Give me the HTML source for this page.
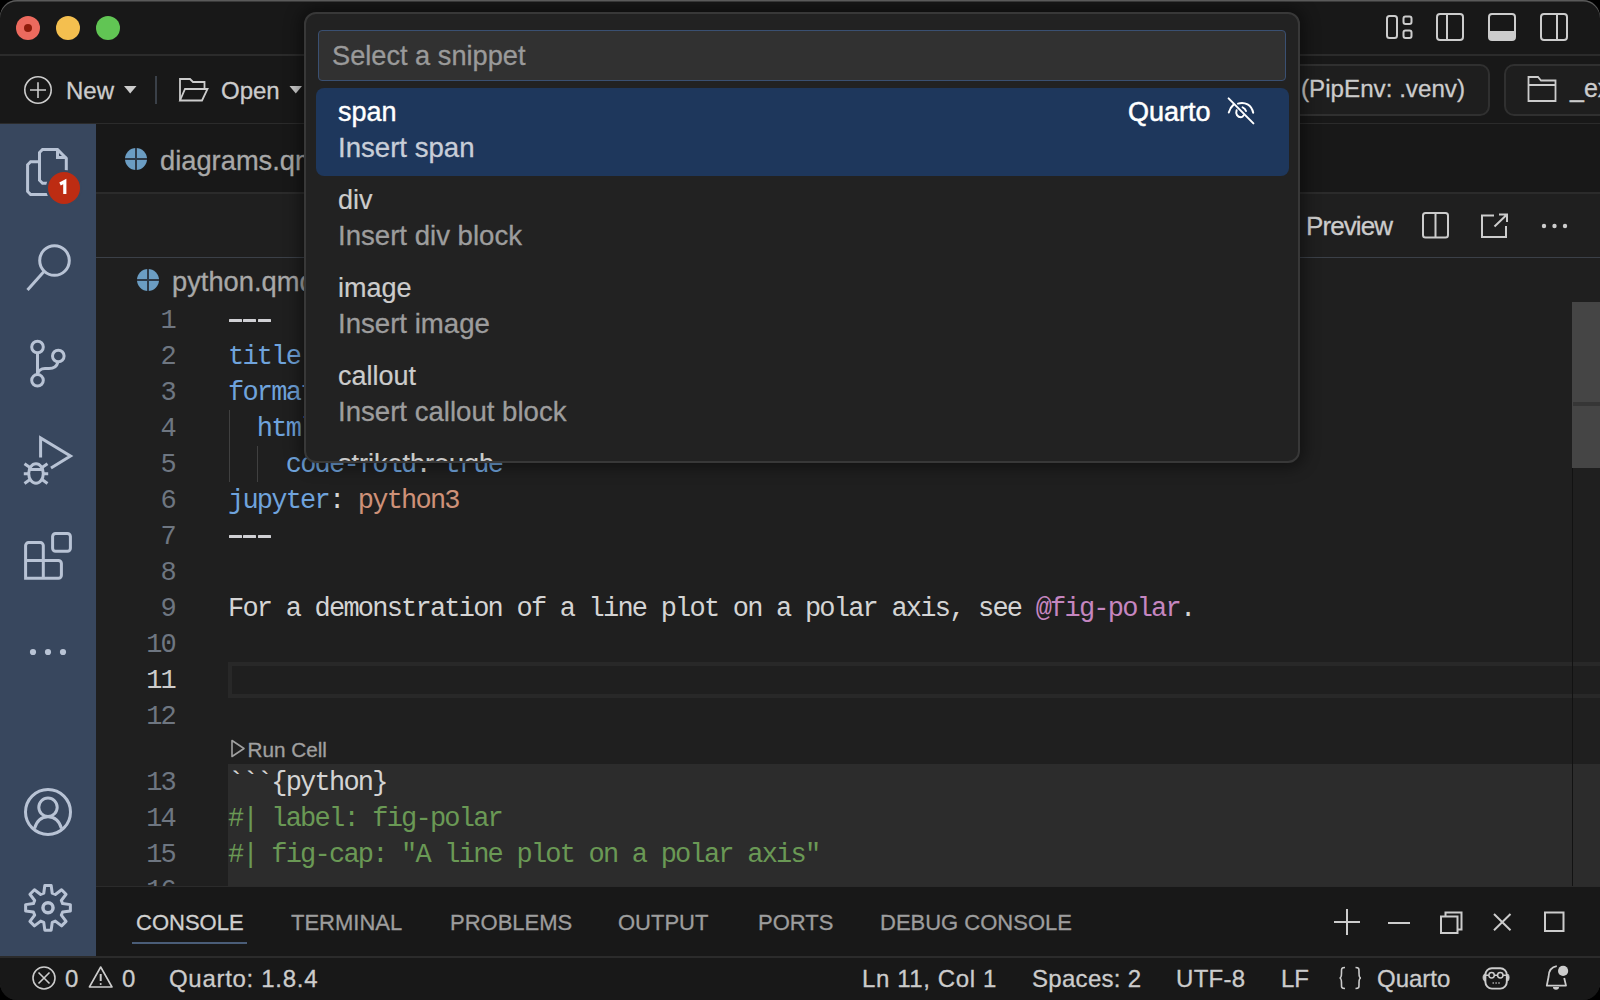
<!DOCTYPE html>
<html><head><meta charset="utf-8">
<style>
*{box-sizing:border-box;margin:0;padding:0}
html,body{width:1600px;height:1000px;overflow:hidden;background:#000}
body{font-family:"Liberation Sans",sans-serif;color:#cccccc;position:relative}
.a{position:absolute}
#win{position:absolute;left:0;top:0;width:1600px;height:1000px;border-radius:17px;overflow:hidden;background:#181818}
#winborder{position:absolute;left:0;top:0;width:1600px;height:1000px;border-radius:17px;box-shadow:inset 0 1.5px 0 #5a5a5a;pointer-events:none}
.mono{font-family:"Liberation Mono",monospace}
.t{position:absolute;white-space:pre;line-height:1;-webkit-text-stroke:0.3px}
svg{position:absolute;overflow:visible}
.ln{position:absolute;left:100px;width:75px;text-align:right;font-family:"Liberation Mono",monospace;font-size:27px;letter-spacing:-1.78px;margin-top:1px;line-height:36px;color:#6e7681;white-space:pre}
.cl{position:absolute;left:228px;font-family:"Liberation Mono",monospace;font-size:27px;letter-spacing:-1.78px;margin-top:1px;line-height:36px;color:#d4d4d4;white-space:pre}
.k{color:#6fa3dc}.s{color:#ce9178}.p{color:#c586c0}.c{color:#6a9955}
</style></head><body>
<div id="win">

  <div class="a" style="left:0;top:0;width:1600px;height:54px;background:#181818"></div>
  <div class="a" style="left:0;top:54px;width:1600px;height:2px;background:#2b2b2b"></div>
  <div class="a" style="left:16px;top:16px;width:24px;height:24px;border-radius:50%;background:#ec6a5e"></div>
  <div class="a" style="left:24px;top:24px;width:8px;height:8px;border-radius:50%;background:#8e1c0b"></div>
  <div class="a" style="left:56px;top:16px;width:24px;height:24px;border-radius:50%;background:#f4bf4f"></div>
  <div class="a" style="left:96px;top:16px;width:24px;height:24px;border-radius:50%;background:#61c554"></div>
  <svg style="left:0;top:0" width="1600" height="54" fill="none" stroke="#cccccc" stroke-width="2">
    <rect x="1387" y="16" width="10" height="22" rx="2.5"/>
    <rect x="1403.5" y="16.5" width="8" height="7.5" rx="2"/>
    <rect x="1403.5" y="30.5" width="8" height="7.5" rx="2"/>
    <rect x="1437" y="14" width="26" height="26" rx="3"/>
    <line x1="1447" y1="14" x2="1447" y2="40"/>
    <rect x="1489" y="14" width="26" height="26" rx="3"/>
    <path d="M1489 31 H1515 V37 a3 3 0 0 1 -3 3 H1492 a3 3 0 0 1 -3 -3 Z" fill="#cccccc" stroke="none"/>
    <rect x="1541" y="14" width="26" height="26" rx="3"/>
    <line x1="1557" y1="14" x2="1557" y2="40"/>
  </svg>


  <div class="a" style="left:0;top:123px;width:1600px;height:1px;background:#2b2b2b"></div>
  <svg style="left:0;top:56px" width="320" height="66" fill="none" stroke="#cccccc" stroke-width="1.6">
    <circle cx="38" cy="34" r="13.2"/>
    <path d="M30 34 H46 M38 26.2 V42"/>
    <path d="M124 30 L136.5 30 L130.2 37.6 Z" fill="#cccccc" stroke="none"/>
    <line x1="156" y1="20" x2="156" y2="48" stroke="#3a4048" stroke-width="2"/>
    <path d="M180 44.5 V23 H190 L193 26 H204.5 V32.5" stroke-width="1.8"/>
    <path d="M180 44.5 L185 33 H207.5 L202 44.5 Z" stroke-width="1.8"/>
    <path d="M289.5 30 L302 30 L295.8 37.6 Z" fill="#cccccc" stroke="none"/>
  </svg>
  <div class="t" style="left:66px;top:79px;font-size:24px;color:#cccccc">New</div>
  <div class="t" style="left:221px;top:79px;font-size:24px;color:#cccccc">Open</div>
  <div class="a" style="left:1160px;top:64px;width:330px;height:52px;border:2px solid #303030;border-radius:10px;background:#1e1e1e"></div>
  <div class="t" style="left:1301px;top:77px;font-size:24.2px;color:#cccccc">(PipEnv: .venv)</div>
  <div class="a" style="left:1504px;top:64px;width:140px;height:52px;border:2px solid #303030;border-radius:10px;background:#1e1e1e"></div>
  <svg style="left:0;top:56px" width="1600" height="66" fill="none" stroke="#cccccc" stroke-width="1.8">
    <path d="M1528.5 45 V21 H1538 L1541 24.5 H1555.5 V45 Z"/>
    <path d="M1528.5 29 H1555.5"/>
  </svg>
  <div class="t" style="left:1570px;top:76px;font-size:25px;color:#cccccc">_ex</div>


  <div class="a" style="left:0;top:124px;width:96px;height:832px;background:#38475e"></div>
  <svg style="left:0;top:0" width="96" height="1000" fill="none" stroke="#b8c3d5" stroke-width="3" stroke-linejoin="round">
    <!-- files -->
    <path d="M42.5 183.2 L39.5 180.2 V152.5 L42.5 149.5 H57.5 L66.3 158.3 V183.2 Z" stroke-linejoin="miter"/>
    <path d="M57.5 149.5 V157.6 H66.3" stroke-linejoin="miter"/>
    <path d="M39.5 161.8 H30.6 L27.6 164.8 V191.5 L30.6 194.5 H52" stroke-linejoin="miter"/>
    <!-- search -->
    <circle cx="54.5" cy="260.5" r="14.8"/>
    <line x1="44" y1="271.5" x2="27.5" y2="290"/>
    <!-- git -->
    <circle cx="37.5" cy="347" r="5.8"/>
    <circle cx="58.3" cy="356" r="5.8"/>
    <circle cx="37.5" cy="380.3" r="5.8"/>
    <path d="M37.5 352.8 V374.5"/>
    <path d="M58 361.8 C57 366 54 368.5 49 368.5 H45 C41 368.5 38 371 37.5 374.5"/>
    <!-- debug -->
    <path d="M40.6 457.5 V438 L70.5 456 L51 468" stroke-linejoin="miter"/>
    <ellipse cx="36" cy="473.5" rx="7.3" ry="9.8"/>
    <path d="M28.5 469.5 H43.5"/>
    <path d="M24.5 463.8 L30 467.5 M47.5 463.8 L42 467.5 M23.8 473.8 H28.5 M48.2 473.8 H43.5 M24.5 483.5 L30 479.5 M47.5 483.5 L42 479.5"/>
    <!-- extensions -->
    <path d="M25.6 578.3 V545.6 a3 3 0 0 1 3 -3 H40.3 a3 3 0 0 1 3 3 V560.4 H58.4 a3 3 0 0 1 3 3 V575.3 a3 3 0 0 1 -3 3 Z" stroke-linejoin="miter"/>
    <path d="M25.6 560.4 H43.3 V578.3"/>
    <rect x="52.6" y="533.5" width="17.8" height="17.8" rx="3"/>
    <!-- account -->
    <circle cx="48" cy="812" r="22.5"/>
    <circle cx="48" cy="807.2" r="9.2"/>
    <path d="M34.5 828.5 C37 820 42 816.8 48 816.8 C54 816.8 59 820 61.5 828.5"/>
    <!-- gear -->
    <path d="M43.76 893.20 L44.82 885.43 L51.18 885.43 L52.24 893.20 L55.32 894.48 L61.57 889.73 L66.07 894.23 L61.32 900.48 L62.60 903.56 L70.37 904.62 L70.37 910.98 L62.60 912.04 L61.32 915.12 L66.07 921.37 L61.57 925.87 L55.32 921.12 L52.24 922.40 L51.18 930.17 L44.82 930.17 L43.76 922.40 L40.68 921.12 L34.43 925.87 L29.93 921.37 L34.68 915.12 L33.40 912.04 L25.63 910.98 L25.63 904.62 L33.40 903.56 L34.68 900.48 L29.93 894.23 L34.43 889.73 L40.68 894.48 Z"/>
    <circle cx="48" cy="907.8" r="5.05" stroke-width="3.5"/>
  </svg>
  <svg style="left:0;top:0" width="96" height="1000">
    <circle cx="33" cy="652" r="3.1" fill="#b8c3d5"/>
    <circle cx="48" cy="652" r="3.1" fill="#b8c3d5"/>
    <circle cx="63" cy="652" r="3.1" fill="#b8c3d5"/>
    <circle cx="64" cy="188" r="18" fill="#38475e"/>
    <circle cx="64" cy="188" r="16" fill="#bd2c12"/>
    <path d="M60 184 L64.8 181.5 V194" stroke="#ffffff" stroke-width="3.2" fill="none" stroke-linejoin="miter"/>
  </svg>
  


  <!-- tab bar -->
  <div class="a" style="left:96px;top:124px;width:1504px;height:68px;background:#181818"></div>
  <svg style="left:125px;top:148px" width="22" height="22">
    <circle cx="11" cy="11" r="11" fill="#6b9dc3"/>
    <line x1="11" y1="0" x2="11" y2="22" stroke="#2d3947" stroke-width="2"/>
    <line x1="0" y1="11" x2="22" y2="11" stroke="#2d3947" stroke-width="2"/>
  </svg>
  <div class="t" style="left:160px;top:147px;font-size:27.3px;color:#a8a8a8">diagrams.qmd</div>
  <div class="a" style="left:96px;top:192px;width:1504px;height:2px;background:#2b2b2b"></div>
  <!-- editor header -->
  <div class="a" style="left:96px;top:194px;width:1504px;height:63px;background:#1f1f1f"></div>
  <div class="t" style="left:1306px;top:213px;font-size:26px;letter-spacing:-0.9px;color:#cccccc">Preview</div>
  <svg style="left:0;top:0" width="1600" height="300" fill="none" stroke="#cccccc" stroke-width="2">
    <rect x="1423" y="213" width="25" height="24.5" rx="2.5"/>
    <line x1="1435.5" y1="213" x2="1435.5" y2="237.5"/>
    <path d="M1494 215.5 H1482 V237 H1506 V226"/>
    <path d="M1494.5 226.5 L1507 214.5 M1499 214.5 H1507 V222"/>
  </svg>
  <svg style="left:0;top:0" width="1600" height="300">
    <circle cx="1544" cy="226" r="2.2" fill="#cccccc"/>
    <circle cx="1554.5" cy="226" r="2.2" fill="#cccccc"/>
    <circle cx="1565" cy="226" r="2.2" fill="#cccccc"/>
  </svg>
  <div class="a" style="left:96px;top:257px;width:1504px;height:1px;background:#3b4048"></div>
  <!-- editor body -->
  <div class="a" style="left:96px;top:258px;width:1504px;height:628px;background:#1f1f1f"></div>
  <svg style="left:137px;top:269px" width="22" height="22">
    <circle cx="11" cy="11" r="11" fill="#6b9dc3"/>
    <line x1="11" y1="0" x2="11" y2="22" stroke="#2d3947" stroke-width="2"/>
    <line x1="0" y1="11" x2="22" y2="11" stroke="#2d3947" stroke-width="2"/>
  </svg>
  <div class="t" style="left:172px;top:268px;font-size:27.3px;color:#a8a8a8">python.qmd</div>
  <div class="a" style="left:229.00px;top:319px;width:13px;height:3px;background:#d0d0d4;border-radius:0.5px"></div><div class="a" style="left:243.45px;top:319px;width:13px;height:3px;background:#d0d0d4;border-radius:0.5px"></div><div class="a" style="left:257.90px;top:319px;width:13px;height:3px;background:#d0d0d4;border-radius:0.5px"></div><div class="a" style="left:229.00px;top:535px;width:13px;height:3px;background:#d0d0d4;border-radius:0.5px"></div><div class="a" style="left:243.45px;top:535px;width:13px;height:3px;background:#d0d0d4;border-radius:0.5px"></div><div class="a" style="left:257.90px;top:535px;width:13px;height:3px;background:#d0d0d4;border-radius:0.5px"></div>
  <!-- current line -->
  <div class="a" style="left:228px;top:662px;width:1380px;height:36px;border:4px solid #282828"></div>
  <!-- cell bg -->
  <div class="a" style="left:228px;top:764px;width:1372px;height:122px;background:#2c2c2c"></div>
  <!-- indent guides -->
  <div class="a" style="left:229px;top:410px;width:1px;height:72px;background:#404040"></div>
  <div class="a" style="left:257px;top:446px;width:1px;height:36px;background:#404040"></div>
<div class="a" style="left:96px;top:302px;width:1476px;height:584px;overflow:hidden"><div class="ln" style="top:0px;left:4px;color:#6e7681">1</div><div class="cl" style="top:0px;left:132px"></div><div class="ln" style="top:36px;left:4px;color:#6e7681">2</div><div class="cl" style="top:36px;left:132px"><span class="k">title</span>: "Python"</div><div class="ln" style="top:72px;left:4px;color:#6e7681">3</div><div class="cl" style="top:72px;left:132px"><span class="k">format</span>:</div><div class="ln" style="top:108px;left:4px;color:#6e7681">4</div><div class="cl" style="top:108px;left:132px">  <span class="k">html</span>:</div><div class="ln" style="top:144px;left:4px;color:#6e7681">5</div><div class="cl" style="top:144px;left:132px">    <span class="k">code-fold</span>: <span class="k">true</span></div><div class="ln" style="top:180px;left:4px;color:#6e7681">6</div><div class="cl" style="top:180px;left:132px"><span class="k">jupyter</span>: <span class="s">python3</span></div><div class="ln" style="top:216px;left:4px;color:#6e7681">7</div><div class="cl" style="top:216px;left:132px"></div><div class="ln" style="top:252px;left:4px;color:#6e7681">8</div><div class="cl" style="top:252px;left:132px"></div><div class="ln" style="top:288px;left:4px;color:#6e7681">9</div><div class="cl" style="top:288px;left:132px">For a demonstration of a line plot on a polar axis, see <span class="p">@fig-polar</span>.</div><div class="ln" style="top:324px;left:4px;color:#6e7681">10</div><div class="cl" style="top:324px;left:132px"></div><div class="ln" style="top:360px;left:4px;color:#cccccc">11</div><div class="cl" style="top:360px;left:132px"></div><div class="ln" style="top:396px;left:4px;color:#6e7681">12</div><div class="cl" style="top:396px;left:132px"></div><div class="ln" style="top:462px;left:4px;color:#6e7681">13</div><div class="cl" style="top:462px;left:132px">```{python}</div><div class="ln" style="top:498px;left:4px;color:#6e7681">14</div><div class="cl" style="top:498px;left:132px"><span class="c">#| label: fig-polar</span></div><div class="ln" style="top:534px;left:4px;color:#6e7681">15</div><div class="cl" style="top:534px;left:132px"><span class="c">#| fig-cap: "A line plot on a polar axis"</span></div><div class="ln" style="top:570px;left:4px;color:#6e7681">16</div><div class="cl" style="top:570px;left:132px"></div></div>
  <svg style="left:228px;top:738px" width="20" height="22" fill="none" stroke="#a0a0a0" stroke-width="1.6"><path d="M4 2.5 L16 10.5 L4 18.5 Z" stroke-linejoin="round"/></svg>
  <div class="t" style="left:247.5px;top:740px;font-size:20.7px;color:#a0a0a0">Run Cell</div>
  <!-- scrollbar -->
  <div class="a" style="left:1572px;top:302px;width:1px;height:584px;background:#121212"></div>
  <div class="a" style="left:1572px;top:302px;width:28px;height:166px;background:#454545"></div>
  <div class="a" style="left:1573px;top:402px;width:27px;height:3.6px;background:#363636"></div>


  <div class="a" style="left:96px;top:886px;width:1504px;height:1px;background:#2b2b2b"></div>
  <div class="a" style="left:96px;top:887px;width:1504px;height:69px;background:#181818"></div>
  <div class="t" style="left:136px;top:912px;font-size:22px;color:#d0d0d0">CONSOLE</div>
  <div class="a" style="left:132px;top:942px;width:115px;height:2px;background:#4a5d78"></div>
  <div class="t" style="left:291px;top:912px;font-size:22px;color:#9d9d9d">TERMINAL</div>
  <div class="t" style="left:450px;top:912px;font-size:22px;color:#9d9d9d">PROBLEMS</div>
  <div class="t" style="left:618px;top:912px;font-size:22px;color:#9d9d9d">OUTPUT</div>
  <div class="t" style="left:758px;top:912px;font-size:22px;color:#9d9d9d">PORTS</div>
  <div class="t" style="left:880px;top:912px;font-size:22px;color:#9d9d9d">DEBUG CONSOLE</div>
  <svg style="left:0;top:0" width="1600" height="1000" fill="none" stroke="#cccccc" stroke-width="2">
    <path d="M1334 922 H1360 M1347 909 V935"/>
    <path d="M1388 923 H1410"/>
    <rect x="1445.5" y="912.5" width="16" height="17"/>
    <rect x="1441" y="916.5" width="16.5" height="16.5" fill="#181818"/>
    <path d="M1494 914 L1510.5 930.3 M1510.5 914 L1494 930.3"/>
    <rect x="1545" y="912.5" width="18.5" height="18.5"/>
  </svg>


  <div class="a" style="left:0;top:956px;width:1600px;height:2px;background:#2b2b2b"></div>
  <div class="a" style="left:0;top:958px;width:1600px;height:42px;background:#181818"></div>
  <svg style="left:0;top:0" width="1600" height="1000" fill="none" stroke="#cccccc" stroke-width="1.6">
    <circle cx="44" cy="978" r="11"/>
    <path d="M38.5 972.5 L49.5 983.5 M49.5 972.5 L38.5 983.5"/>
    <path d="M100.7 967 L112 987 H89.4 Z" stroke-linejoin="round"/>
    <path d="M100.7 974 V981" stroke-width="2"/>
    <circle cx="100.7" cy="984" r="1" fill="#cccccc" stroke="none"/>
    <path d="M1345 967.5 C1341 967.5 1341.5 969 1341.5 973 C1341.5 976.5 1341 978 1339.5 978 C1341 978 1341.5 979.5 1341.5 983 C1341.5 987 1341 988.5 1345 988.5"/>
    <path d="M1355.5 967.5 C1359.5 967.5 1359 969 1359 973 C1359 976.5 1359.5 978 1361 978 C1359.5 978 1359 979.5 1359 983 C1359 987 1359.5 988.5 1355.5 988.5"/>
    <rect x="1485.4" y="968.2" width="21.4" height="20.4" rx="6.5" stroke-width="1.9"/>
    <circle cx="1491.6" cy="975.3" r="2.7" stroke-width="1.5"/>
    <circle cx="1500.3" cy="975.3" r="2.7" stroke-width="1.5"/>
    <path d="M1494.3 975.3 H1497.6 M1485.4 975.3 H1488.9 M1503 975.3 H1506.8" stroke-width="1.4"/>
    <path d="M1484.6 974 C1482.6 975 1482.6 980 1484.6 981 Z M1507.6 974 C1509.6 975 1509.6 980 1507.6 981 Z" fill="#cccccc" stroke-width="1"/>
    <path d="M1492.6 983 h1.2 M1495.5 983 h1.2 M1498.4 983 h1.2" stroke-width="1.6"/>
    <path d="M1556.8 966.2 C1551.5 967 1548.8 971 1548.6 976.5 L1546.8 985.6 H1566 L1564.2 978" stroke-width="1.8" stroke-linejoin="round"/>
    <path d="M1553 987 a3 2.8 0 0 0 6 0 Z" fill="#cccccc" stroke="none"/>
  </svg>
  <svg style="left:0;top:0" width="1600" height="1000"><circle cx="1563.1" cy="970.9" r="5.1" fill="#cccccc"/></svg>
  <div class="t" style="left:65px;top:967px;font-size:24px;color:#cccccc">0</div>
  <div class="t" style="left:122px;top:967px;font-size:24px;color:#cccccc">0</div>
  <div class="t" style="left:169px;top:967px;font-size:24px;color:#cccccc;letter-spacing:0.7px">Quarto: 1.8.4</div>
  <div class="t" style="left:862px;top:967px;font-size:24px;color:#cccccc;letter-spacing:0.6px">Ln 11, Col 1</div>
  <div class="t" style="left:1032px;top:967px;font-size:24px;color:#cccccc;letter-spacing:0.3px">Spaces: 2</div>
  <div class="t" style="left:1176px;top:967px;font-size:24px;color:#cccccc;letter-spacing:0.3px">UTF-8</div>
  <div class="t" style="left:1281px;top:967px;font-size:24px;color:#cccccc">LF</div>
  <div class="t" style="left:1377px;top:967px;font-size:24px;color:#cccccc">Quarto</div>


  <div class="a" style="left:304px;top:12px;width:996px;height:451px;border-radius:12px;background:#222222;border:2px solid #383838;box-shadow:0 0 16px 4px rgba(0,0,0,0.45);overflow:hidden">
    <div class="a" style="left:12px;top:16px;width:968px;height:51px;border:1.5px solid #3a5072;border-radius:4px;background:#313131"></div>
    <div class="t" style="left:26px;top:28px;font-size:27.2px;color:#9a9a9a">Select a snippet</div>
    <div class="a" style="left:10px;top:74px;width:973px;height:88px;border-radius:8px;background:#1e375c"></div>
    <div class="t" style="left:32px;top:84.5px;font-size:27px;color:#ffffff;-webkit-text-stroke:0.4px #ffffff">span</div>
    <div class="t" style="left:32px;top:120.3px;font-size:27.6px;color:#c8ced8">Insert span</div>
    <div class="t" style="left:822px;top:84.5px;font-size:27px;color:#ffffff;-webkit-text-stroke:0.5px #ffffff">Quarto</div>
    <svg style="left:909.5px;top:76.5px" width="50" height="40" fill="none" stroke="#ffffff" stroke-width="2" stroke-linecap="round">
      <path d="M12.6 7.4 L37.4 32.4"/>
      <path d="M12.8 21.6 C13.8 18 15.5 15.3 17.6 13.6"/>
      <path d="M22 12.6 C29 10.5 35.5 14 37.2 21.8"/>
      <path d="M20.6 19.3 C19.3 23 21.5 26.2 25 26.2 C26.2 26.2 27 25.6 27.6 24.4"/>
      <path d="M26.6 16.4 C28.2 17 29.5 18.4 30 20"/>
    </svg>
    <div class="t" style="left:32px;top:172.5px;font-size:27px;color:#cccccc;-webkit-text-stroke:0.2px #cccccc">div</div>
    <div class="t" style="left:32px;top:208.3px;font-size:27.6px;color:#9d9d9d">Insert div block</div>
    <div class="t" style="left:32px;top:260.5px;font-size:27px;color:#cccccc;-webkit-text-stroke:0.2px #cccccc">image</div>
    <div class="t" style="left:32px;top:296.3px;font-size:27.6px;color:#9d9d9d">Insert image</div>
    <div class="t" style="left:32px;top:348.5px;font-size:27px;color:#cccccc;-webkit-text-stroke:0.2px #cccccc">callout</div>
    <div class="t" style="left:32px;top:384.3px;font-size:27.6px;color:#9d9d9d">Insert callout block</div>
    <div class="t" style="left:32px;top:436.5px;font-size:27px;color:#cccccc;-webkit-text-stroke:0.2px #cccccc">strikethrough</div>
  </div>

</div>
<div id="winborder"></div>
</body></html>
